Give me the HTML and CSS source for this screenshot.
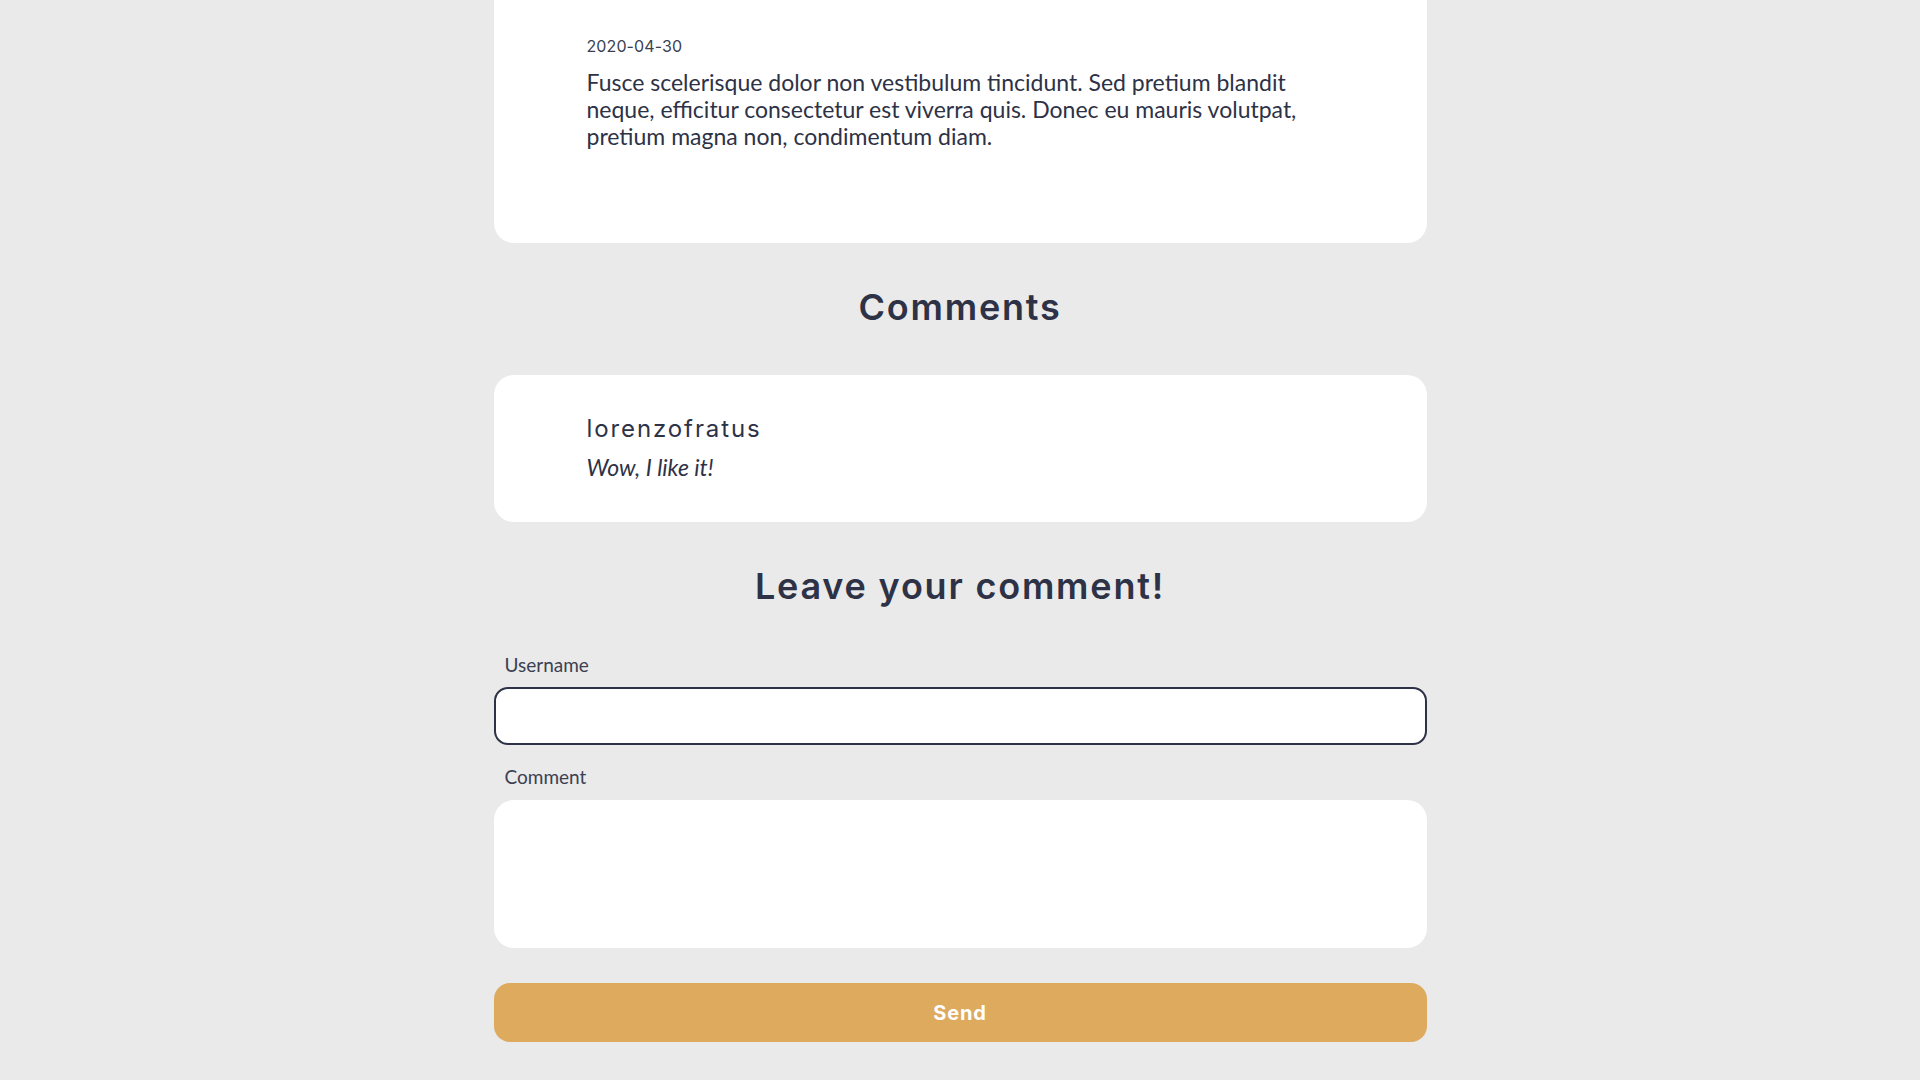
FILE: index.html
```html
<!DOCTYPE html>
<html lang="en">
<head>
<meta charset="utf-8">
<title>Post</title>
<link rel="stylesheet" href="styles.css">
</head>
<body>
<main class="page">
  <article class="card post">
    <p class="post-date">2020-04-30</p>
    <p class="post-body">Fusce scelerisque dolor non vestibulum tincidunt. Sed pretium blandit neque, efficitur consectetur est viverra quis. Donec eu mauris volutpat, pretium magna non, condimentum diam.</p>
  </article>

  <h2 class="section-title">Comments</h2>

  <div class="card comment">
    <p class="comment-user">lorenzofratus</p>
    <p class="comment-text">Wow, I like it!</p>
  </div>

  <h2 class="section-title form-title">Leave your comment!</h2>

  <form class="comment-form">
    <label class="field-label" for="username">Username</label>
    <input class="field-input" id="username" type="text">
    <label class="field-label label-comment" for="comment">Comment</label>
    <textarea class="field-area" id="comment"></textarea>
    <button class="send-btn" type="button">Send</button>
  </form>
</main>
</body>
</html>
```

FILE: styles.css
```css
* { box-sizing: border-box; }

html, body {
  margin: 0;
  padding: 0;
  background: #eaeaea;
}

body {
  font-family: "Lato", "Open Sans", sans-serif;
  color: #2e3246;
}

.page {
  width: 933px;
  margin: 0 auto;
  display: flex;
  flex-direction: column;
  padding-bottom: 38px;
}

p { margin: 0; }

.card {
  background: #ffffff;
  border-radius: 20px;
}

.post {
  border-radius: 0 0 20px 20px;
  padding: 36px 93px 93px;
}

.post-date {
  font-family: "Inter", "Noto Sans", sans-serif;
  font-size: 16px;
  line-height: 20px;
  color: #3a3f52;
  letter-spacing: 0.1px;
}

.post-body {
  margin-top: 13px;
  font-size: 23px;
  line-height: 27px;
  color: #2e3246;
}

.section-title {
  margin: 43px 0 46px;
  text-align: center;
  font-family: "Inter", "Noto Sans", sans-serif;
  font-weight: 600;
  font-size: 36px;
  line-height: 43px;
  color: #2e3246;
  letter-spacing: 1.8px;
}

.form-title {
  margin: 43px 0 46px;
}

.comment {
  padding: 39px 93px 41px;
}

.comment-user {
  font-family: "Inter", "Noto Sans", sans-serif;
  font-weight: 400;
  font-size: 24px;
  line-height: 29px;
  letter-spacing: 1.9px;
  color: #2e3246;
}

.comment-text {
  margin-top: 11px;
  font-style: italic;
  font-size: 23px;
  line-height: 27px;
  color: #2e3246;
}

.comment-form {
  display: flex;
  flex-direction: column;
}

.field-label {
  padding-left: 11px;
  font-size: 19px;
  line-height: 22px;
  color: #3b4052;
  margin-bottom: 11px;
}

.label-comment {
  margin-top: 21px;
  margin-bottom: 12px;
}

.field-input {
  height: 58px;
  border: 2px solid #2e3246;
  border-radius: 14px;
  background: #ffffff;
  outline: none;
  font-family: inherit;
  font-size: 18px;
  padding: 0 16px;
}

.field-area {
  height: 148px;
  border: none;
  border-radius: 20px;
  background: #ffffff;
  resize: none;
  outline: none;
  font-family: inherit;
  font-size: 18px;
  padding: 16px;
}

.send-btn {
  margin-top: 35px;
  height: 59px;
  border: none;
  border-radius: 16px;
  background: #ddaa5e;
  color: #ffffff;
  font-family: "Inter", "Noto Sans", sans-serif;
  font-weight: 700;
  font-size: 20px;
  letter-spacing: 0.8px;
  cursor: pointer;
}
```
